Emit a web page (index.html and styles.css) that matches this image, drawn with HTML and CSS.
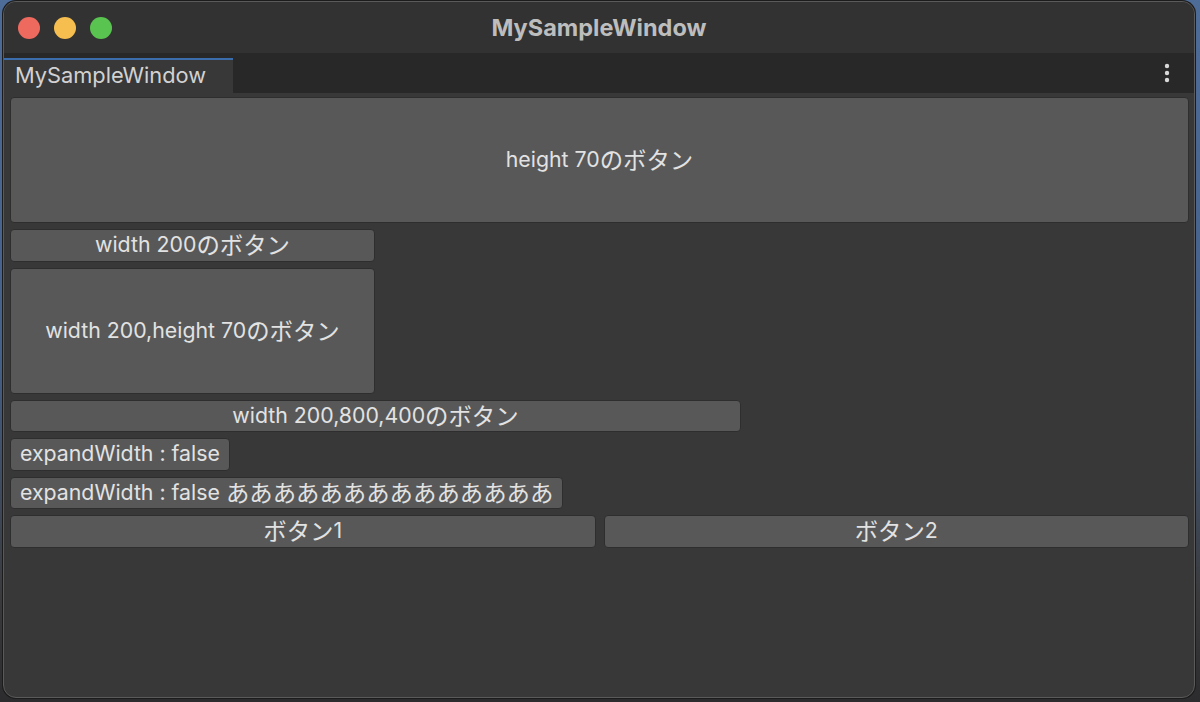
FILE: index.html
```html
<!DOCTYPE html>
<html lang="ja">
<head>
<meta charset="utf-8">
<title>MySampleWindow</title>
<link rel="stylesheet" href="styles.css">
</head>
<body>
<div class="window">
  <div class="titlebar">
    <div class="lights">
      <span class="light red"></span>
      <span class="light yellow"></span>
      <span class="light green"></span>
    </div>
    <div class="title">MySampleWindow</div>
  </div>
  <div class="tabbar">
    <div class="tab">MySampleWindow</div>
    <div class="kebab">
      <svg width="6" height="20" viewBox="0 0 6 20"><circle cx="3" cy="3" r="2.2" fill="#d8d8d8"/><circle cx="3" cy="10" r="2.2" fill="#d8d8d8"/><circle cx="3" cy="17" r="2.2" fill="#d8d8d8"/></svg>
    </div>
  </div>
  <div class="content">
    <div class="btn tall full">height 70<span class="ja">のボタン</span></div>
    <div class="btn w200">width 200<span class="ja">のボタン</span></div>
    <div class="btn tall w200">width 200,height 70<span class="ja">のボタン</span></div>
    <div class="btn w400">width 200,800,400<span class="ja">のボタン</span></div>
    <div class="btn fit">expandWidth : false</div>
    <div class="btn fit">expandWidth : false <span class="ja">ああああああああああああああ</span></div>
    <div class="row">
      <div class="btn grow"><span class="ja">ボタン</span>1</div>
      <div class="btn grow"><span class="ja">ボタン</span>2</div>
    </div>
  </div>
</div>
</body>
</html>
```

FILE: styles.css
```css
* { box-sizing: border-box; }
html, body { margin: 0; padding: 0; }
body {
  width: 1200px;
  height: 702px;
  background: linear-gradient(180deg, #4e6c98 0%, #45618a 50%, #3a3a3c 85%, #2c2c2e 100%);
  padding: 1px 5px 4px 3px;
  font-family: Inter, "Noto Sans CJK JP", sans-serif;
  overflow: hidden;
}
.window {
  height: 697px;
  background: #383838;
  border-radius: 13px;
  border: 1px solid #5a5a5a;
  box-shadow: 0 0 0 1px #1c1c1c;
  overflow: hidden;
  display: flex;
  flex-direction: column;
}
.titlebar {
  height: 51px;
  background: #323232;
  display: flex;
  align-items: center;
  position: relative;
  flex: none;
}
.lights {
  display: flex;
  gap: 14px;
  padding-left: 14px;
}
.light {
  width: 22px;
  height: 22px;
  border-radius: 50%;
  display: block;
}
.red { background: #ee6a5f; }
.yellow { background: #f5be4f; }
.green { background: #5ac451; }
.title {
  position: absolute;
  left: 0;
  right: 0;
  text-align: center;
  font-weight: 700;
  font-size: 23.5px;
  color: #bdbdbd;
  pointer-events: none;
}
.tabbar {
  height: 40px;
  background: #282828;
  display: flex;
  align-items: flex-end;
  justify-content: space-between;
  flex: none;
}
.tab {
  width: 229px;
  height: 35px;
  background: #383838;
  border-top: 2px solid #3b6cab;
  color: #d2d2d2;
  font-size: 21.8px;
  padding: 1px 0 0 11px;
  line-height: 28px;
}
.kebab {
  align-self: center;
  padding-right: 24px;
  display: flex;
}
.content {
  padding: 4px 6px 0 6px;
  display: flex;
  flex-direction: column;
  gap: 6px;
  align-items: flex-start;
}
.btn {
  height: 32.5px;
  background: #585858;
  border: 1px solid #2e2e2e;
  border-radius: 4px;
  color: #e2e2e2;
  font-size: 21.3px;
  display: flex;
  align-items: center;
  justify-content: center;
  white-space: pre;
  padding: 0 0 2px 0;
}
.ja { font-size: 23.4px; }
.tall { height: 126px; }
.full { width: 1179px; }
.w200 { width: 365px; }
.w400 { width: 731px; }
.fit { width: auto; padding: 0 9px 2px 9px; }
.row {
  display: flex;
  gap: 8px;
  width: 1179px;
}
.grow { flex: 1; }
```
